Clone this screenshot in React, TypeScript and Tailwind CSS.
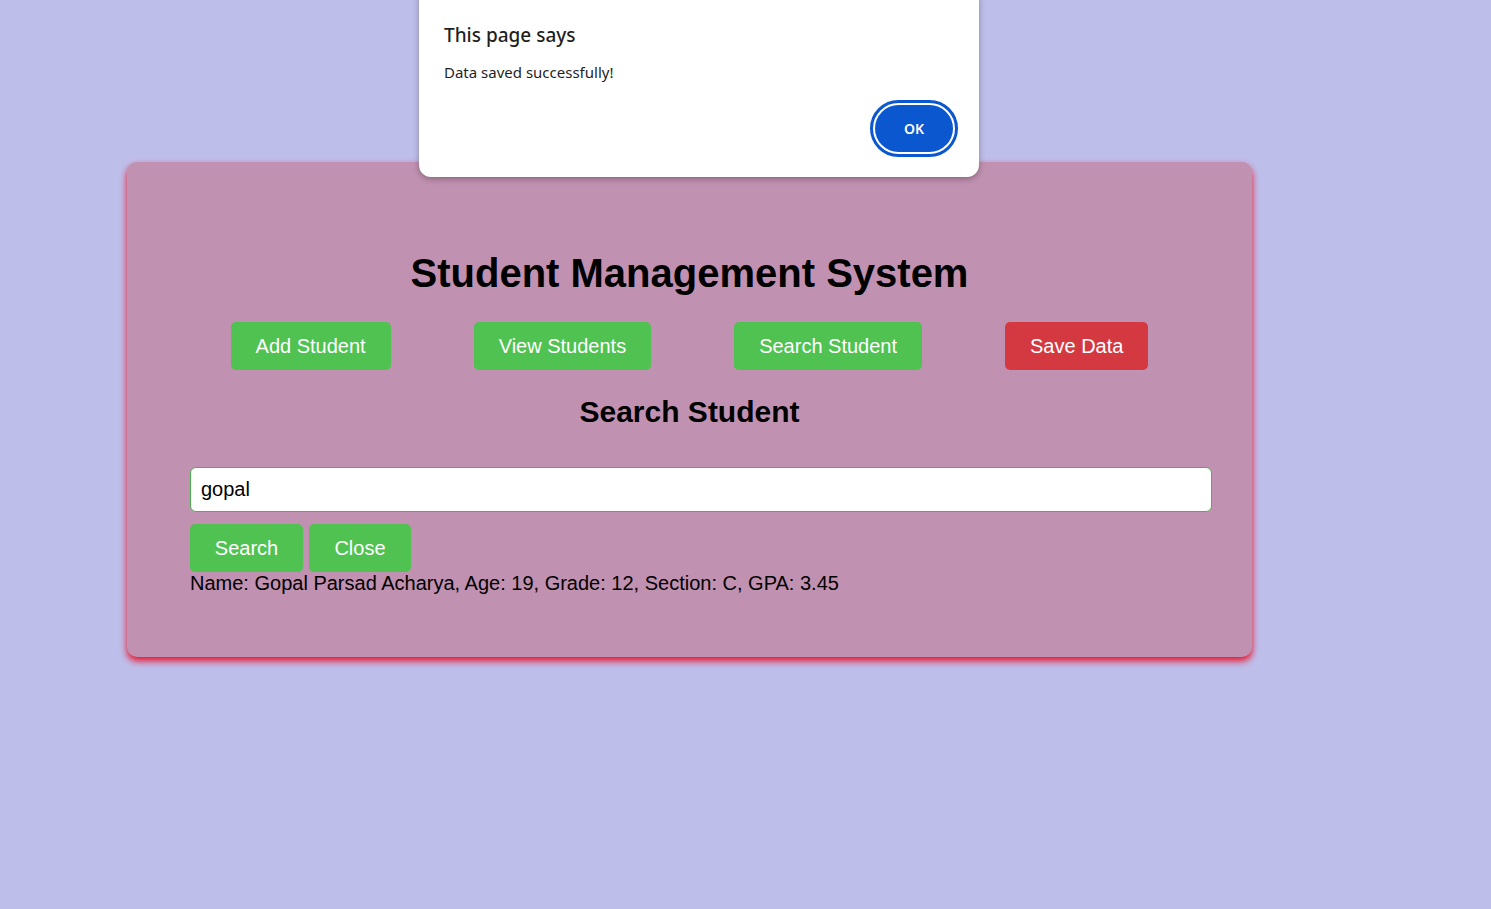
import React from "react";

const navButtons = [
  { label: "Add Student", color: "bg-[#50c252]" },
  { label: "View Students", color: "bg-[#50c252]" },
  { label: "Search Student", color: "bg-[#50c252]" },
  { label: "Save Data", color: "bg-[#d43942]" },
];

const App = () => {
  return (
    <div className="relative min-h-[909px] w-full bg-[#bebeeb] font-['Liberation_Sans',Arial,sans-serif] text-black">
      <div className="pt-[162px] pl-[127px]">
        <div className="w-[1125px] rounded-[10px] bg-[#c191b1] px-[63px] pt-[88px] pb-[62px] shadow-[0_4px_7px_rgba(235,10,30,0.95)]">
          <h1 className="text-center text-[40px] font-bold leading-[46px]">Student Management System</h1>
          <div className="mt-[26px] flex justify-center gap-[83px]">
            {navButtons.map((b) => (
              <button
                key={b.label}
                className={`${b.color} h-[48px] rounded-[5px] px-[25px] text-[20px] text-white`}
              >
                {b.label}
              </button>
            ))}
          </div>
          <h2 className="mt-[24px] text-center text-[30px] font-bold leading-[35px]">Search Student</h2>
          <input
            readOnly
            value="gopal"
            className="mt-[38px] block h-[45px] w-[1022px] rounded-[6px] border border-[#4caf50] bg-white px-[10px] text-[20px] outline-none"
          />
          <div className="mt-[12px] flex gap-[6px]">
            <button className="h-[48px] w-[113px] rounded-[5px] bg-[#50c252] text-[20px] text-white">Search</button>
            <button className="h-[48px] w-[102px] rounded-[5px] bg-[#50c252] text-[20px] text-white">Close</button>
          </div>
          <p className="text-[20px] leading-[23px]">
            Name: Gopal Parsad Acharya, Age: 19, Grade: 12, Section: C, GPA: 3.45
          </p>
        </div>
      </div>

      {/* browser alert */}
      <div className="absolute left-[419px] top-[-12px] h-[189px] w-[560px] rounded-[12px] bg-white font-['Noto_Sans','Open_Sans',sans-serif] shadow-[0_2px_6px_rgba(0,0,0,0.3)]">
        <div className="px-[25px] pt-[34px]">
          <div className="text-[19px] font-medium leading-[26px] text-[#1f1f1f]">This page says</div>
          <div className="mt-[14px] text-[15px] leading-[20px] text-[#1f1f1f]">Data saved successfully!</div>
        </div>
        <div className="absolute right-[21px] bottom-[20px] rounded-full border-[3px] border-[#0b57d0] p-[2px]">
          <button className="h-[47px] w-[78px] rounded-full bg-[#0b57d0] text-[14px] font-semibold text-white">OK</button>
        </div>
      </div>
    </div>
  );
};

export default App;
